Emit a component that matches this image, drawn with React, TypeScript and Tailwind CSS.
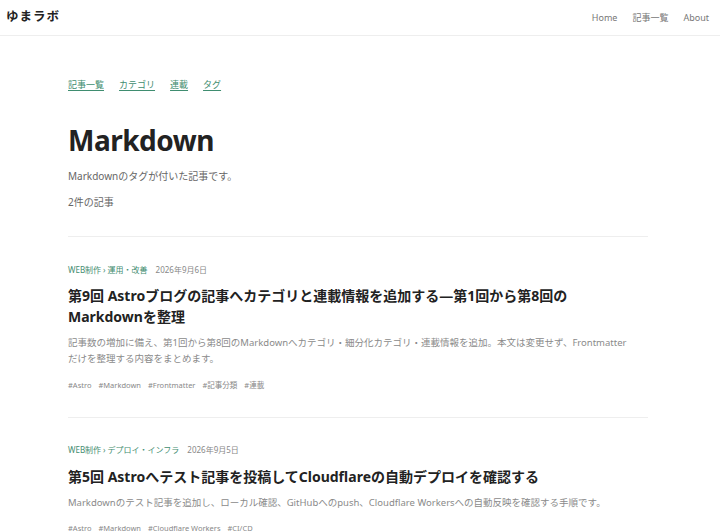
import React from "react";

const font = {
  fontFamily: '"Noto Sans", "Noto Sans CJK JP", sans-serif',
};

type Post = {
  cats: string[];
  date: string;
  title: string;
  excerpt: string;
  tags: string[];
};

const posts: Post[] = [
  {
    cats: ["WEB制作", "運用・改善"],
    date: "2026年9月6日",
    title:
      "第9回 Astroブログの記事へカテゴリと連載情報を追加する—第1回から第8回のMarkdownを整理",
    excerpt:
      "記事数の増加に備え、第1回から第8回のMarkdownへカテゴリ・細分化カテゴリ・連載情報を追加。本文は変更せず、Frontmatterだけを整理する内容をまとめます。",
    tags: ["#Astro", "#Markdown", "#Frontmatter", "#記事分類", "#連載"],
  },
  {
    cats: ["WEB制作", "デプロイ・インフラ"],
    date: "2026年9月5日",
    title: "第5回 Astroへテスト記事を投稿してCloudflareの自動デプロイを確認する",
    excerpt:
      "Markdownのテスト記事を追加し、ローカル確認、GitHubへのpush、Cloudflare Workersへの自動反映を確認する手順です。",
    tags: ["#Astro", "#Markdown", "#Cloudflare Workers", "#CI/CD"],
  },
];

function Article({ p, first }: { p: Post; first: boolean }) {
  return (
    <article
      className={
        first
          ? "border-b border-[#eeeeee] pt-[27px] pb-[26px]"
          : "pt-[26px] pb-[26px]"
      }
    >
      <div className="flex items-center gap-[8px] text-[8px] leading-[12px]">
        <span className="text-[#3f8d70]">
          {p.cats[0]}
          <span className="mx-[2px]">›</span>
          {p.cats[1]}
        </span>
        <span className="text-[#888888]">{p.date}</span>
      </div>
      <h2
        className={
          "pr-[16px] text-[14px] leading-[21px] font-bold text-[#222222] " +
          (first ? "mt-[8.5px]" : "mt-[9.5px]")
        }
      >
        {p.title}
      </h2>
      <p className="mt-[8.5px] pr-[16px] text-[9.5px] leading-[16px] text-[#8a8a8a]">
        {p.excerpt}
      </p>
      <div
        className={
          "flex gap-[7px] text-[7.5px] leading-[12px] text-[#888888] " +
          (first ? "mt-[12px]" : "mt-[11px]")
        }
      >
        {p.tags.map((t) => (
          <span key={t}>{t}</span>
        ))}
      </div>
    </article>
  );
}

export default function App() {
  return (
    <div className="min-h-[531px] bg-white" style={font}>
      <header className="h-[36px] flex items-center justify-between border-b border-[#eeeeee] pl-[6px] pr-[11px]">
        <div className="text-[12.5px] font-bold text-[#222222] tracking-[1px]">ゆまラボ</div>
        <nav className="flex gap-[15px] text-[9px] text-[#777777]">
          <span>Home</span>
          <span>記事一覧</span>
          <span>About</span>
        </nav>
      </header>
      <main className="pl-[68px] w-[648px]">
        <div className="mt-[43px] flex gap-[15px] text-[9px] leading-[12px] text-[#3f8d70]">
          <span className="underline underline-offset-2">記事一覧</span>
          <span className="underline underline-offset-2">カテゴリ</span>
          <span className="underline underline-offset-2">連載</span>
          <span className="underline underline-offset-2">タグ</span>
        </div>
        <h1 className="mt-[31px] text-[28px] leading-[36px] font-bold tracking-[-0.5px] text-[#222222]">
          Markdown
        </h1>
        <p className="mt-[11px] text-[10px] leading-[14px] text-[#666666]">
          Markdownのタグが付いた記事です。
        </p>
        <p className="mt-[12px] text-[10px] leading-[14px] text-[#666666]">2件の記事</p>
        <div className="mt-[27px] border-t border-[#eeeeee]" />
        {posts.map((p, i) => (
          <Article key={i} p={p} first={i === 0} />
        ))}
      </main>
    </div>
  );
}
